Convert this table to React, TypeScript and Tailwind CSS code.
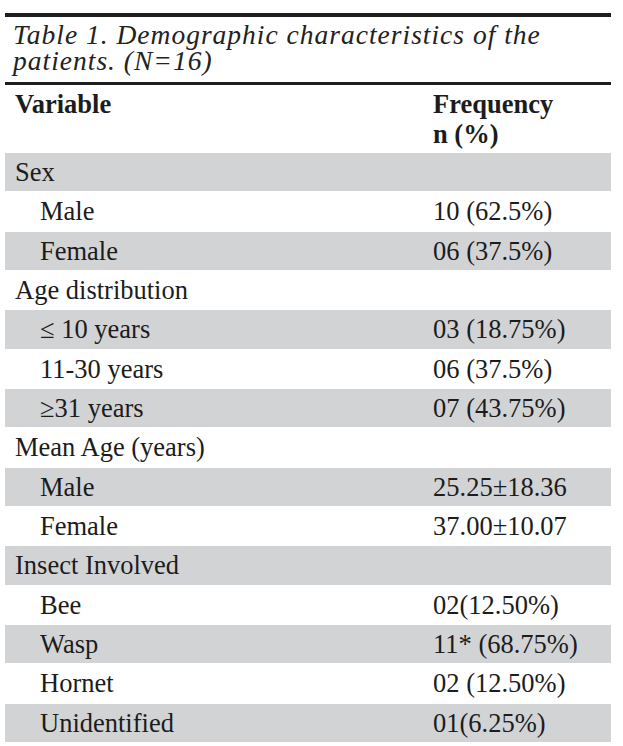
type Row = { label: string; value?: string; indent?: boolean };

const rows: Row[] = [
  { label: "Sex" },
  { label: "Male", value: "10 (62.5%)", indent: true },
  { label: "Female", value: "06 (37.5%)", indent: true },
  { label: "Age distribution" },
  { label: "≤ 10 years", value: "03 (18.75%)", indent: true },
  { label: "11-30 years", value: "06 (37.5%)", indent: true },
  { label: "≥31 years", value: "07 (43.75%)", indent: true },
  { label: "Mean Age (years)" },
  { label: "Male", value: "25.25±18.36", indent: true },
  { label: "Female", value: "37.00±10.07", indent: true },
  { label: "Insect Involved" },
  { label: "Bee", value: "02(12.50%)", indent: true },
  { label: "Wasp", value: "11* (68.75%)", indent: true },
  { label: "Hornet", value: "02 (12.50%)", indent: true },
  { label: "Unidentified", value: "01(6.25%)", indent: true },
];

export default function App() {
  return (
    <div className="min-h-[746px] bg-white pt-[13px] pl-[5px] text-[#1c1c1c] font-['Liberation_Serif',serif]">
      <div className="w-[606px]">
        {/* caption between the two heavy rules */}
        <div className="border-t-4 border-b-[3px] border-[#1e1e1e] pl-[8px] pt-[5px] h-[72px]">
          <p className="text-[27.5px] leading-[26px] italic tracking-[1px] text-[#222]">
            Table 1. Demographic characteristics of the
            <br />
            patients. (N=16)
          </p>
        </div>
        <div className="flex h-[67px] pt-[4px] text-[26.5px] leading-[30px] font-bold">
          <div className="w-[428px] pl-[10px]">Variable</div>
          <div>
            Frequency
            <br />n (%)
          </div>
        </div>
        {rows.map((r, i) => (
          <div
            key={i}
            className={`flex items-center h-[39.33px] text-[26.5px] leading-none border-t border-white ${
              i % 2 === 0 ? "bg-[#d2d3d5]" : "bg-white"
            }`}
          >
            <div className={`w-[428px] ${r.indent ? "pl-[35px]" : "pl-[10px]"}`}>{r.label}</div>
            <div>{r.value}</div>
          </div>
        ))}
      </div>
    </div>
  );
}
